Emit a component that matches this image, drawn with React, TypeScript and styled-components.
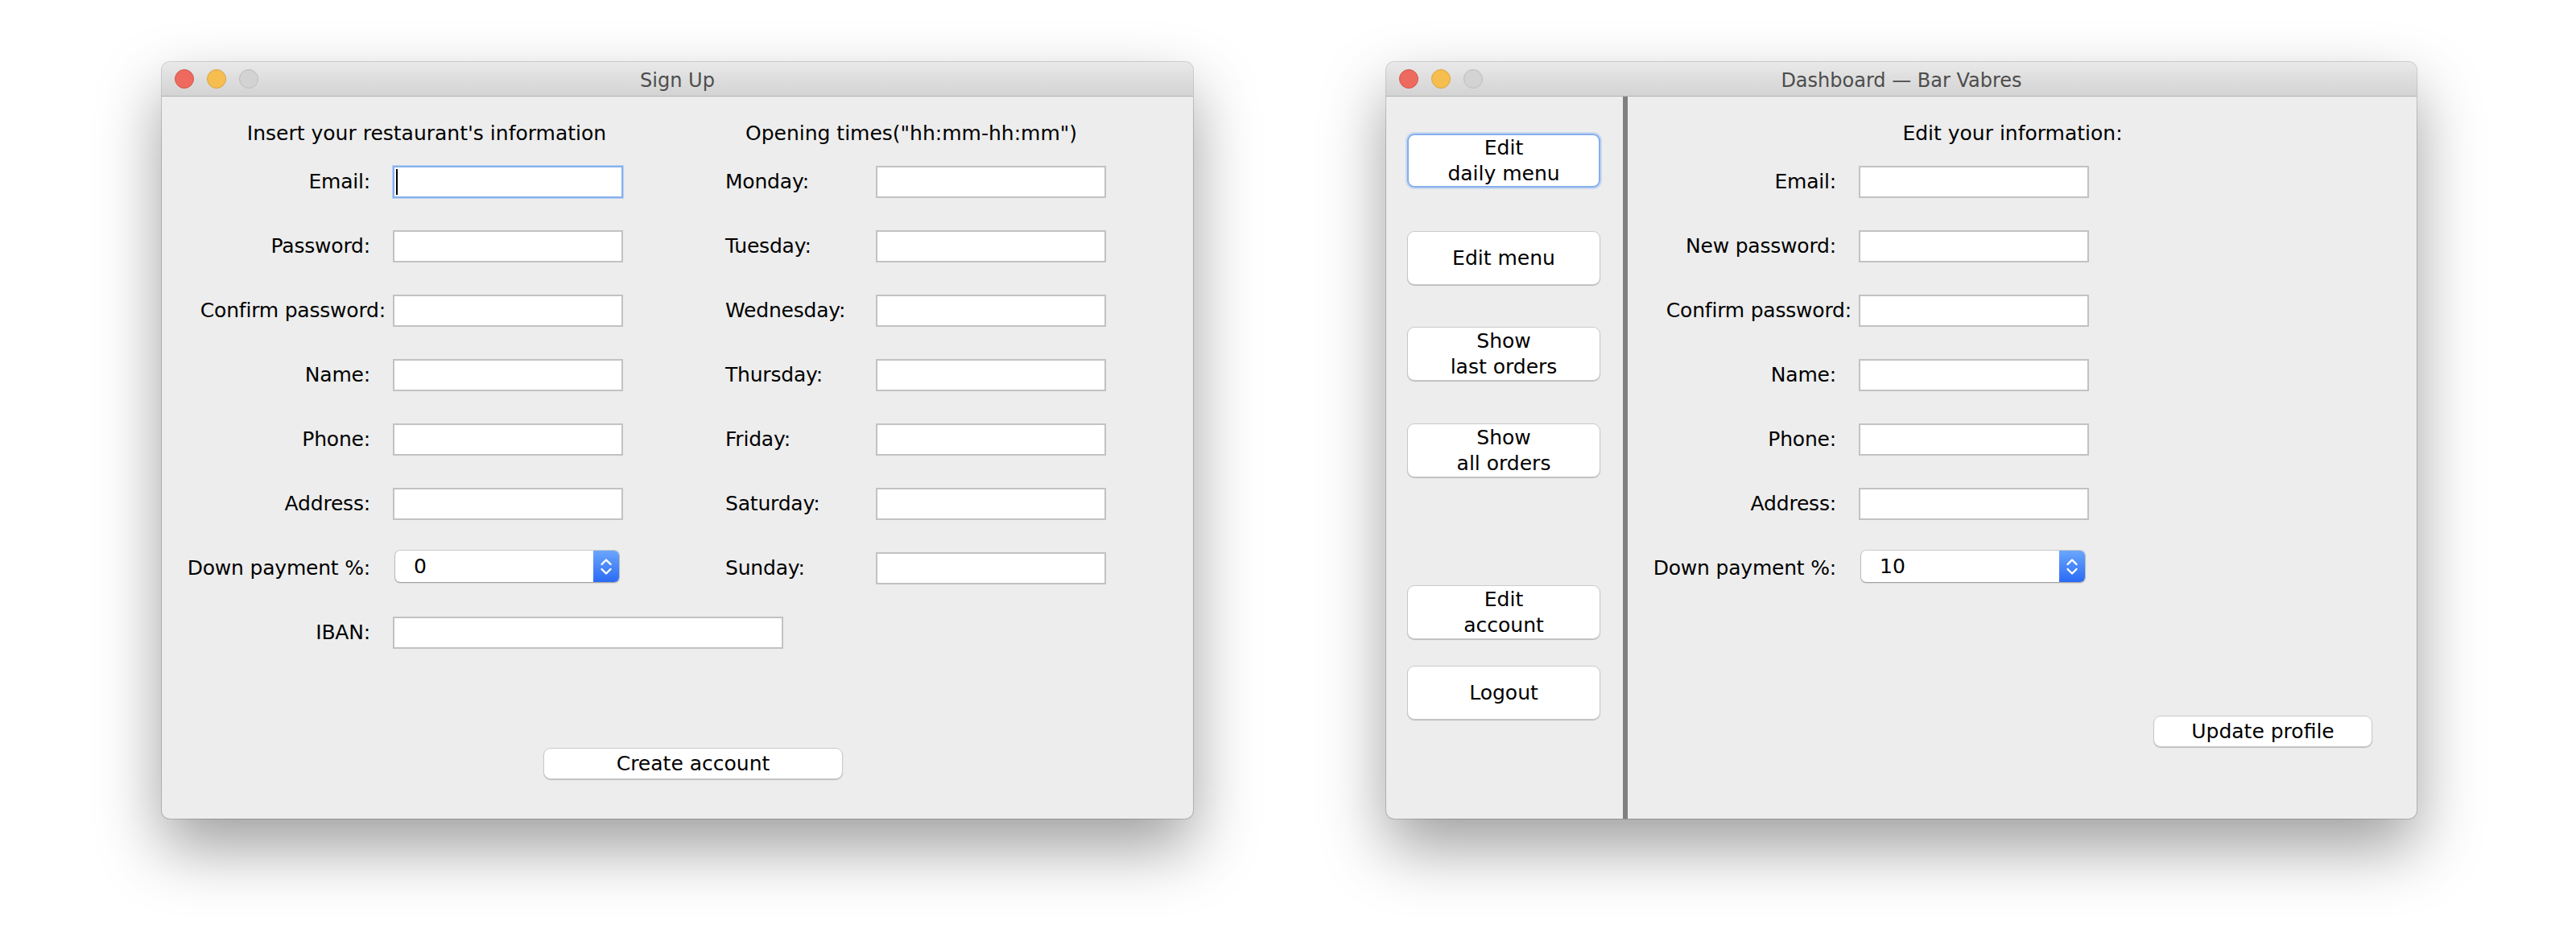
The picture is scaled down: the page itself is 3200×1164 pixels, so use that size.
import React from "react";
import styled, { createGlobalStyle } from "styled-components";

const GlobalStyle = createGlobalStyle`
  html, body {
    margin: 0;
    padding: 0;
    background: #ffffff;
  }
  body {
    font-family: "DejaVu Sans", "Liberation Sans", sans-serif;
    color: #000;
  }
  * {
    box-sizing: border-box;
  }
`;

const Stage = styled.main`
  width: 3200px;
  height: 1164px;
  display: flex;
  align-items: flex-start;
  gap: 240px;
  padding: 77px 0 0 201px;
  overflow: hidden;
  background: #ffffff;
`;

const Window = styled.section<{ $width: number }>`
  width: ${(p) => p.$width}px;
  height: 940px;
  flex: none;
  display: flex;
  flex-direction: column;
  background: #ededed;
  border-radius: 10px;
  overflow: hidden;
  box-shadow: 0 0 0 1px rgba(0, 0, 0, 0.16), 0 36px 80px rgba(0, 0, 0, 0.38);
`;

const TitleBar = styled.header`
  height: 43px;
  flex: none;
  display: grid;
  grid-template-columns: 1fr auto 1fr;
  align-items: center;
  padding: 0 16px;
  background: linear-gradient(#e9e9e9, #d3d3d3);
  border-bottom: 1px solid #b3b3b3;
`;

const Lights = styled.div`
  display: flex;
  gap: 16px;
  align-items: center;
`;

const Light = styled.span<{ $fill: string; $ring: string }>`
  width: 24px;
  height: 24px;
  border-radius: 50%;
  background: ${(p) => p.$fill};
  border: 1px solid ${(p) => p.$ring};
`;

const Title = styled.div`
  font-size: 24px;
  line-height: 30px;
  padding-top: 3px;
  color: #4d4d4d;
  white-space: nowrap;
`;

const SignUpBody = styled.div`
  flex: 1;
  display: flex;
  flex-direction: column;
  padding: 31px 0 0 28px;
`;

const Columns = styled.div`
  display: grid;
  grid-template-columns: 602px 602px;
`;

const Column = styled.div`
  display: flex;
  flex-direction: column;
`;

const Heading = styled.div<{ $width?: number }>`
  width: ${(p) => (p.$width ? `${p.$width}px` : "auto")};
  font-size: 25px;
  line-height: 30px;
  text-align: center;
  white-space: nowrap;
  margin-bottom: 5px;
`;

const FormRow = styled.div<{ $labelWidth: number; $indent: number }>`
  height: 80px;
  display: grid;
  grid-template-columns: ${(p) => p.$labelWidth}px 286px;
  align-items: center;
  padding-left: ${(p) => p.$indent}px;
`;

const Label = styled.span<{ $align: "left" | "right"; $tight?: boolean }>`
  font-size: 25px;
  line-height: 30px;
  white-space: nowrap;
  letter-spacing: -0.2px;
  text-align: ${(p) => p.$align};
  padding-right: ${(p) => (p.$align === "right" ? (p.$tight ? 9 : 28) : 0)}px;
`;

const TextField = styled.div<{ $width?: number; $focused?: boolean }>`
  width: ${(p) => p.$width ?? 286}px;
  height: 40px;
  display: flex;
  align-items: center;
  padding-left: 2px;
  background: #ffffff;
  border: 2px solid ${(p) => (p.$focused ? "#86b0ec" : "#c2c2c2")};
  box-shadow: ${(p) => (p.$focused ? "0 0 0 1px #bcd3f4" : "none")};
`;

const Caret = styled.span`
  width: 2px;
  height: 32px;
  background: #000;
`;

const Spinner = styled.div`
  width: 278px;
  height: 39px;
  margin: -5px 0 0 3px;
  display: flex;
  background: #ffffff;
  border-radius: 6px;
  overflow: hidden;
  box-shadow: 0 0 0 1px rgba(0, 0, 0, 0.13), 0 1px 2px rgba(0, 0, 0, 0.3);
`;

const SpinnerValue = styled.span`
  flex: 1;
  padding-left: 23px;
  font-size: 25px;
  line-height: 39px;
`;

const Stepper = styled.div`
  width: 32px;
  flex: none;
  display: flex;
  align-items: center;
  justify-content: center;
  background: linear-gradient(#6ba6fb, #2a6bf6);
`;

const Footer = styled.div<{ $justify: "flex-start" | "flex-end"; $top: number; $side: number }>`
  display: flex;
  justify-content: ${(p) => p.$justify};
  margin-top: ${(p) => p.$top}px;
  padding-left: ${(p) => (p.$justify === "flex-start" ? p.$side : 0)}px;
  padding-right: ${(p) => (p.$justify === "flex-end" ? p.$side : 0)}px;
`;

const PushButton = styled.button<{
  $width: number;
  $height: number;
  $focused?: boolean;
  $gapBefore?: number;
}>`
  width: ${(p) => p.$width}px;
  height: ${(p) => p.$height}px;
  flex: none;
  margin: ${(p) => p.$gapBefore ?? 0}px 0 0 0;
  padding: 0;
  background: #ffffff;
  border: ${(p) => (p.$focused ? "2px solid #84aeee" : "1px solid #cacaca")};
  border-radius: 9px;
  box-shadow: ${(p) =>
    p.$focused
      ? "0 0 0 2px rgba(140, 180, 240, 0.35)"
      : "0 1px 1px rgba(0, 0, 0, 0.22)"};
  font-family: inherit;
  font-size: 25px;
  line-height: 32px;
  color: #000;
  white-space: pre-line;
  cursor: default;
`;

const DashBody = styled.div`
  flex: 1;
  display: flex;
  min-height: 0;
`;

const Sidebar = styled.nav`
  width: 294px;
  flex: none;
  display: flex;
  flex-direction: column;
  padding: 46px 0 0 26px;
`;

const Divider = styled.div`
  width: 6px;
  flex: none;
  background: #808080;
`;

const MainPane = styled.div`
  flex: 1;
  display: flex;
  flex-direction: column;
  padding: 31px 0 0 28px;
`;

const Chevrons = () => (
  <svg width="16" height="24" viewBox="0 0 16 24" fill="none">
    <path d="M2.5 9 L8 3.5 L13.5 9" stroke="#fff" strokeWidth="2.4" strokeLinecap="round" strokeLinejoin="round" />
    <path d="M2.5 15 L8 20.5 L13.5 15" stroke="#fff" strokeWidth="2.4" strokeLinecap="round" strokeLinejoin="round" />
  </svg>
);

const TrafficLights = () => (
  <Lights>
    <Light $fill="#ee6a5f" $ring="#d1564a" />
    <Light $fill="#f6be4f" $ring="#d9a441" />
    <Light $fill="#d3d3d3" $ring="#bdbdbd" />
  </Lights>
);

type Field = { label: string; tight?: boolean; kind?: "text" | "spin" | "wide" | "focus"; value?: string };

const signUpFields: Field[] = [
  { label: "Email:", kind: "focus" },
  { label: "Password:" },
  { label: "Confirm password:", tight: true },
  { label: "Name:" },
  { label: "Phone:" },
  { label: "Address:" },
  { label: "Down payment %:", kind: "spin", value: "0" },
  { label: "IBAN:", kind: "wide" },
];

const days = ["Monday:", "Tuesday:", "Wednesday:", "Thursday:", "Friday:", "Saturday:", "Sunday:"];

const profileFields: Field[] = [
  { label: "Email:" },
  { label: "New password:" },
  { label: "Confirm password:", tight: true },
  { label: "Name:" },
  { label: "Phone:" },
  { label: "Address:" },
  { label: "Down payment %:", kind: "spin", value: "10" },
];

const renderControl = (f: Field) => {
  if (f.kind === "spin") {
    return (
      <Spinner>
        <SpinnerValue>{f.value}</SpinnerValue>
        <Stepper>
          <Chevrons />
        </Stepper>
      </Spinner>
    );
  }
  if (f.kind === "focus") {
    return (
      <TextField $focused>
        <Caret />
      </TextField>
    );
  }
  if (f.kind === "wide") return <TextField $width={485} />;
  return <TextField />;
};

const sideButtons = [
  { text: "Edit\ndaily menu", gap: 0, focused: true },
  { text: "Edit menu", gap: 54 },
  { text: "Show\nlast orders", gap: 52 },
  { text: "Show\nall orders", gap: 53 },
  { text: "Edit\naccount", gap: 134 },
  { text: "Logout", gap: 33 },
];

export default function App() {
  return (
    <>
      <GlobalStyle />
      <Stage>
        <Window $width={1281}>
          <TitleBar>
            <TrafficLights />
            <Title>Sign Up</Title>
            <span />
          </TitleBar>
          <SignUpBody>
            <Columns>
              <Column>
                <Heading>Insert your restaurant's information</Heading>
                {signUpFields.map((f) => (
                  <FormRow key={f.label} $labelWidth={259} $indent={0}>
                    <Label $align="right" $tight={f.tight}>
                      {f.label}
                    </Label>
                    {renderControl(f)}
                  </FormRow>
                ))}
              </Column>
              <Column>
                <Heading>Opening times("hh:mm-hh:mm")</Heading>
                {days.map((d) => (
                  <FormRow key={d} $labelWidth={187} $indent={70}>
                    <Label $align="left">{d}</Label>
                    <TextField />
                  </FormRow>
                ))}
              </Column>
            </Columns>
            <Footer $justify="flex-start" $top={103} $side={446}>
              <PushButton $width={372} $height={39}>
                Create account
              </PushButton>
            </Footer>
          </SignUpBody>
        </Window>

        <Window $width={1280}>
          <TitleBar>
            <TrafficLights />
            <Title>Dashboard — Bar Vabres</Title>
            <span />
          </TitleBar>
          <DashBody>
            <Sidebar>
              {sideButtons.map((b) => (
                <PushButton key={b.text} $width={240} $height={67} $gapBefore={b.gap} $focused={b.focused}>
                  {b.text}
                </PushButton>
              ))}
            </Sidebar>
            <Divider />
            <MainPane>
              <Heading $width={900}>Edit your information:</Heading>
              {profileFields.map((f) => (
                <FormRow key={f.label} $labelWidth={259} $indent={0}>
                  <Label $align="right" $tight={f.tight}>
                    {f.label}
                  </Label>
                  {renderControl(f)}
                </FormRow>
              ))}
              <Footer $justify="flex-end" $top={143} $side={55}>
                <PushButton $width={272} $height={39}>
                  Update profile
                </PushButton>
              </Footer>
            </MainPane>
          </DashBody>
        </Window>
      </Stage>
    </>
  );
}
